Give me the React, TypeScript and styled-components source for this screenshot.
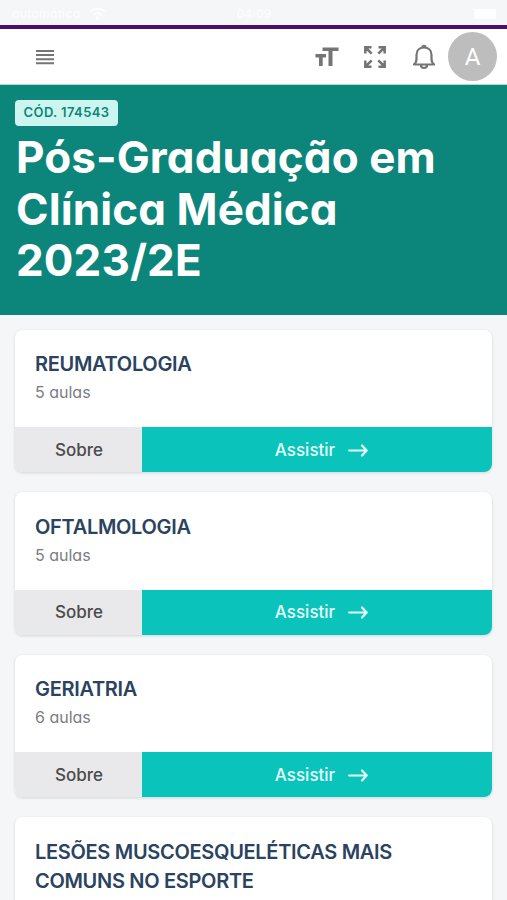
import React from "react";
import styled, { createGlobalStyle } from "styled-components";

const Global = createGlobalStyle`
  * { box-sizing: border-box; }
  html, body { margin: 0; height: 100%; overflow: hidden; }
  body {
    background: #f4f6f9;
    font-family: Inter, "Liberation Sans", sans-serif;
    font-feature-settings: "cv11" 1;
  }
  h1, h2, p { margin: 0; }
  button { font: inherit; font-feature-settings: inherit; border: 0; padding: 0; cursor: pointer; }
`;

const Page = styled.div`
  height: 900px;
  overflow: hidden;
  background: #f4f6f8;
`;

const StatusBar = styled.div`
  display: grid;
  grid-template-columns: 1fr auto 1fr;
  align-items: center;
  height: 25px;
  padding: 2px 11px 0 12px;
  color: #fcfdfe;
  font-size: 12px;
  font-weight: 500;
`;

const Carrier = styled.div`
  display: flex;
  align-items: center;
  gap: 9px;
  letter-spacing: 0.3px;
`;

const Battery = styled.span`
  justify-self: end;
  width: 22px;
  height: 10px;
  border-radius: 2px;
  background: #fdfeff;
`;

const TopBar = styled.header`
  display: flex;
  align-items: center;
  height: 60px;
  padding: 0 10px 0 36px;
  border-top: 4px solid #490f6b;
  border-bottom: 1px solid #a9dedc;
  background: #fff;
`;

const IconButton = styled.button<{ $gap?: number }>`
  display: flex;
  margin-right: ${(p) => p.$gap ?? 0}px;
  background: none;
  color: #757575;
`;

const Spacer = styled.div`
  flex: 1;
`;

const Avatar = styled.div`
  display: grid;
  place-items: center;
  width: 49px;
  height: 49px;
  border-radius: 50%;
  background: #bdbdbd;
  color: #fff;
  font: 400 24px Roboto, sans-serif;
`;

const Hero = styled.section`
  height: 230px;
  padding: 15px 16px 0;
  background: #0c857b;
`;

const Code = styled.span`
  display: block;
  width: 103px;
  height: 26px;
  margin-left: -1px;
  border-radius: 4px;
  background: #cdf5ef;
  color: #0c857b;
  font-size: 13px;
  font-weight: 600;
  letter-spacing: 0.4px;
  line-height: 25px;
  text-align: center;
  white-space: nowrap;
`;

const Title = styled.h1`
  margin-top: 6px;
  color: #fff;
  font-size: 44px;
  font-weight: 700;
  letter-spacing: 0.1px;
  line-height: 51.5px;
`;

const List = styled.main`
  display: flex;
  flex-direction: column;
  gap: 20px;
  padding: 15px 15px 0;
`;

const Card = styled.article`
  flex: none;
  min-height: 142px;
  border-radius: 8px;
  overflow: hidden;
  background: #fff;
  box-shadow: 0 1px 3px rgba(30, 50, 70, 0.16);
`;

const CardBody = styled.div`
  padding: 20.4px 20px 22px;
`;

const CardTitle = styled.h2`
  color: #2a4360;
  font-size: 20px;
  font-weight: 600;
  letter-spacing: -0.31px;
  line-height: 29px;
`;

const Lessons = styled.p`
  color: #7b7d82;
  font-size: 16px;
  line-height: 26px;
`;

const Actions = styled.div`
  display: grid;
  grid-template-columns: 127px 1fr;
  height: 45px;
`;

const Action = styled.button<{ $primary?: boolean }>`
  display: flex;
  align-items: center;
  justify-content: center;
  gap: 13px;
  padding-left: ${(p) => (p.$primary ? 9 : 1)}px;
  background: ${(p) => (p.$primary ? "#0ac3ba" : "#e9e9eb")};
  color: ${(p) => (p.$primary ? "#e6fffc" : "#4b4b4d")};
  font-size: 17px;
  font-weight: 500;
`;

const WifiIcon = () => (
  <svg width="17" height="13" viewBox="0 0 17 13" fill="none" stroke="currentColor" strokeWidth="2">
    <path d="M1 4.5Q8.500-1.500 16 4.500M4 8Q8.500 4 13 8" />
    <circle cx="8.500" cy="11" r="1" fill="currentColor" />
  </svg>
);

const MenuIcon = () => (
  <svg width="18" height="16" viewBox="0 0 18 16" stroke="currentColor" strokeWidth="2">
    <path d="M0 2H18M0 6H18M0 10.200H18M0 14.300H18" />
  </svg>
);

const TextSizeIcon = () => (
  <svg width="24" height="20" viewBox="0 0 24 20" fill="currentColor">
    <path d="M7.500 0.500H23.500V4H17.500V19H13.500V4H7.500zM0.500 7H11V10.500H7.700V19H4V10.500H0.500z" />
  </svg>
);

const ExpandIcon = () => (
  <svg width="24" height="24" viewBox="0 0 24 24" fill="none" stroke="currentColor" strokeWidth="2.500">
    <path d="M2.300 8.500V2.300H8.500M2.500 2.500L8.700 8.700M15.500 2.300H21.700V8.500M21.500 2.500L15.300 8.700M2.300 15.500V21.700H8.500M2.500 21.500L8.700 15.300M15.500 21.700H21.700V15.500M21.500 21.500L15.300 15.300" />
  </svg>
);

const BellIcon = () => (
  <svg width="24" height="26" viewBox="0 0 24 26" fill="none" stroke="currentColor" strokeWidth="2.200" strokeLinejoin="round">
    <path d="M2 20.500C4 19 4.500 17 4.500 14.500V11C4.500 6.500 7.500 3.500 12 3.500S19.500 6.500 19.500 11V14.500C19.500 17 20 19 22 20.500Z" />
    <path d="M9 21C9 25 15 25 15 21M10.500 3C10.500 1.500 13.500 1.500 13.500 3" />
  </svg>
);

const ArrowIcon = () => (
  <svg width="20" height="14" viewBox="0 0 20 14" fill="none" stroke="currentColor" strokeWidth="2.200" strokeLinecap="round" strokeLinejoin="round">
    <path d="M1.200 7.500H18.700M14 2.500L18.700 7.500L14 12.500" />
  </svg>
);

const courses = [
  { title: "REUMATOLOGIA", lessons: "5 aulas" },
  { title: "OFTALMOLOGIA", lessons: "5 aulas" },
  { title: "GERIATRIA", lessons: "6 aulas" },
  { title: "LESÕES MUSCOESQUELÉTICAS MAIS COMUNS NO ESPORTE" },
];

export default function App() {
  return (
    <Page>
      <Global />
      <StatusBar>
        <Carrier>
          <span>automática</span>
          <WifiIcon />
        </Carrier>
        <span>04:09</span>
        <Battery />
      </StatusBar>
      <TopBar>
        <IconButton aria-label="Menu"><MenuIcon /></IconButton>
        <Spacer />
        <IconButton $gap={24} aria-label="Tamanho do texto"><TextSizeIcon /></IconButton>
        <IconButton $gap={25} aria-label="Tela cheia"><ExpandIcon /></IconButton>
        <IconButton $gap={12} aria-label="Notificações"><BellIcon /></IconButton>
        <Avatar>A</Avatar>
      </TopBar>
      <Hero>
        <Code>CÓD. 174543</Code>
        <Title>Pós-Graduação em Clínica Médica 2023/2E</Title>
      </Hero>
      <List>
        {courses.map((course) => (
          <Card key={course.title}>
            <CardBody>
              <CardTitle>{course.title}</CardTitle>
              {course.lessons && <Lessons>{course.lessons}</Lessons>}
            </CardBody>
            {course.lessons && (
              <Actions>
                <Action>Sobre</Action>
                <Action $primary>Assistir <ArrowIcon /></Action>
              </Actions>
            )}
          </Card>
        ))}
      </List>
    </Page>
  );
}
